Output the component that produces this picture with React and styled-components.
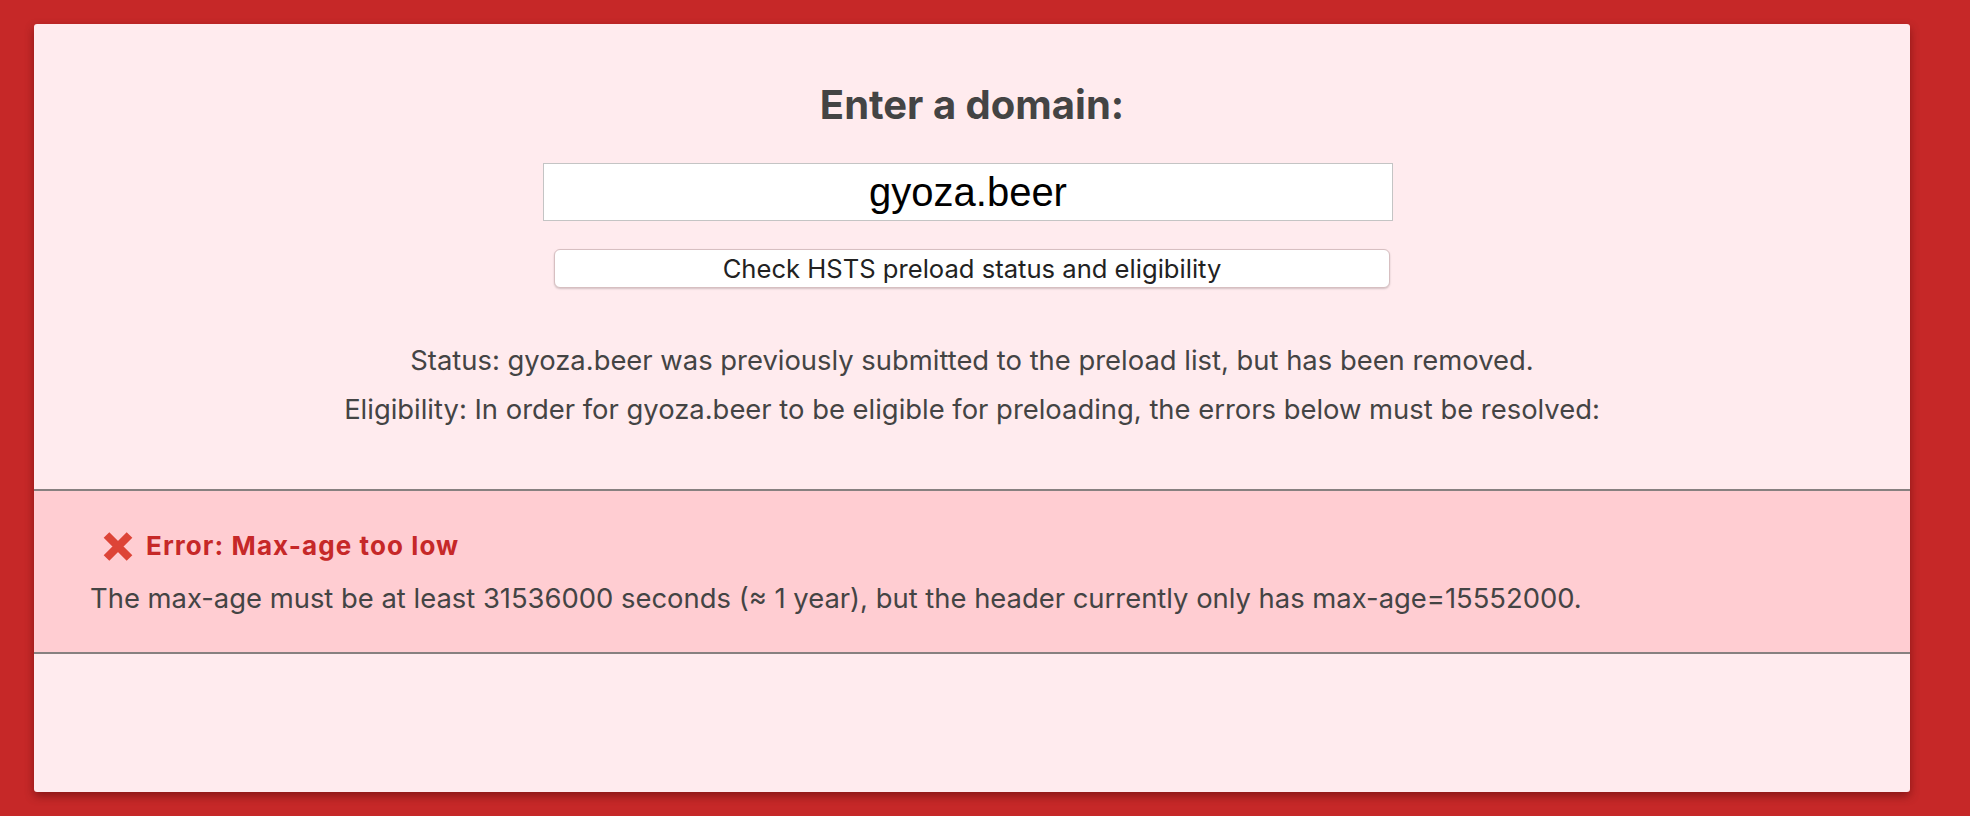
import React from "react";
import styled, { createGlobalStyle } from "styled-components";

const GlobalStyle = createGlobalStyle`
  html, body {
    margin: 0;
    padding: 0;
    background: #c62828;
  }
  body {
    font-family: Inter, "Noto Sans", sans-serif;
  }
`;

const Page = styled.div`
  padding: 24px 60px 24px 34px;
`;

const Card = styled.main`
  background: #ffebee;
  border-radius: 3px;
  box-shadow: 0 4px 10px rgba(60, 0, 0, 0.45);
  height: 768px;
  box-sizing: border-box;
  padding-top: 58px;
  display: flex;
  flex-direction: column;
  color: #444;
`;

const Form = styled.form`
  display: flex;
  flex-direction: column;
  align-items: center;
`;

const Heading = styled.h1`
  margin: 0;
  font-size: 40px;
  font-weight: 700;
  line-height: 46px;
  color: #444;
`;

const DomainInput = styled.input`
  margin: 35px 8px 0 0;
  width: 850px;
  height: 58px;
  box-sizing: border-box;
  border: 1px solid #c4c4c4;
  box-shadow: 0 0 0 1px #fff inset;
  background: #fff;
  text-align: center;
  font-family: "Liberation Sans", Arial, sans-serif;
  font-size: 40px;
  color: #000;
  outline: none;
`;

const CheckButton = styled.button`
  margin-top: 28px;
  width: 836px;
  height: 39px;
  box-sizing: border-box;
  background: #fff;
  border: 1px solid #d7bfc1;
  border-radius: 6px;
  box-shadow: 0 1px 2px rgba(0, 0, 0, 0.18);
  font-family: Inter, "Noto Sans", sans-serif;
  font-size: 25.6px;
  color: #222;
  padding: 0;
`;

const Summary = styled.div`
  margin-top: 48px;
  display: flex;
  flex-direction: column;
  align-items: center;
`;

const Line = styled.p`
  margin: 0;
  font-size: 27.4px;
  line-height: 49px;
  color: #444;
`;

const Issues = styled.section`
  margin-top: 55px;
  background: #ffcdd2;
  border-top: 2px solid #878080;
  border-bottom: 2px solid #878080;
  padding: 38px 56px 0;
  height: 165px;
  box-sizing: border-box;
`;

const IssueTitle = styled.h3`
  margin: 0 0 0 12px;
  display: flex;
  align-items: center;
  gap: 12px;
  font-size: 26px;
  font-weight: 700;
  letter-spacing: 1.1px;
  line-height: 34px;
  color: #c62828;
`;

const IssueText = styled.p`
  margin: 18px 0 0;
  font-size: 27.4px;
  line-height: 34px;
  color: #444;
`;

const Cross = () => (
  <svg width="32" height="31" viewBox="0 0 32 31" aria-hidden="true">
    <path
      d="M4.5 4 L27.5 27 M27.5 4 L4.5 27"
      stroke="#dd4437"
      strokeWidth="8"
      strokeLinecap="butt"
      fill="none"
    />
  </svg>
);

export default function App() {
  return (
    <>
      <GlobalStyle />
      <Page>
        <Card>
          <Form onSubmit={(e) => e.preventDefault()}>
            <Heading>Enter a domain:</Heading>
            <DomainInput defaultValue="gyoza.beer" />
            <CheckButton type="submit">
              Check HSTS preload status and eligibility
            </CheckButton>
          </Form>
          <Summary>
            <Line>
              Status: gyoza.beer was previously submitted to the preload list,
              but has been removed.
            </Line>
            <Line>
              Eligibility: In order for gyoza.beer to be eligible for
              preloading, the errors below must be resolved:
            </Line>
          </Summary>
          <Issues>
            <IssueTitle>
              <Cross />
              Error: Max-age too low
            </IssueTitle>
            <IssueText>
              The max-age must be at least 31536000 seconds (≈ 1 year), but the
              header currently only has max-age=15552000.
            </IssueText>
          </Issues>
        </Card>
      </Page>
    </>
  );
}
